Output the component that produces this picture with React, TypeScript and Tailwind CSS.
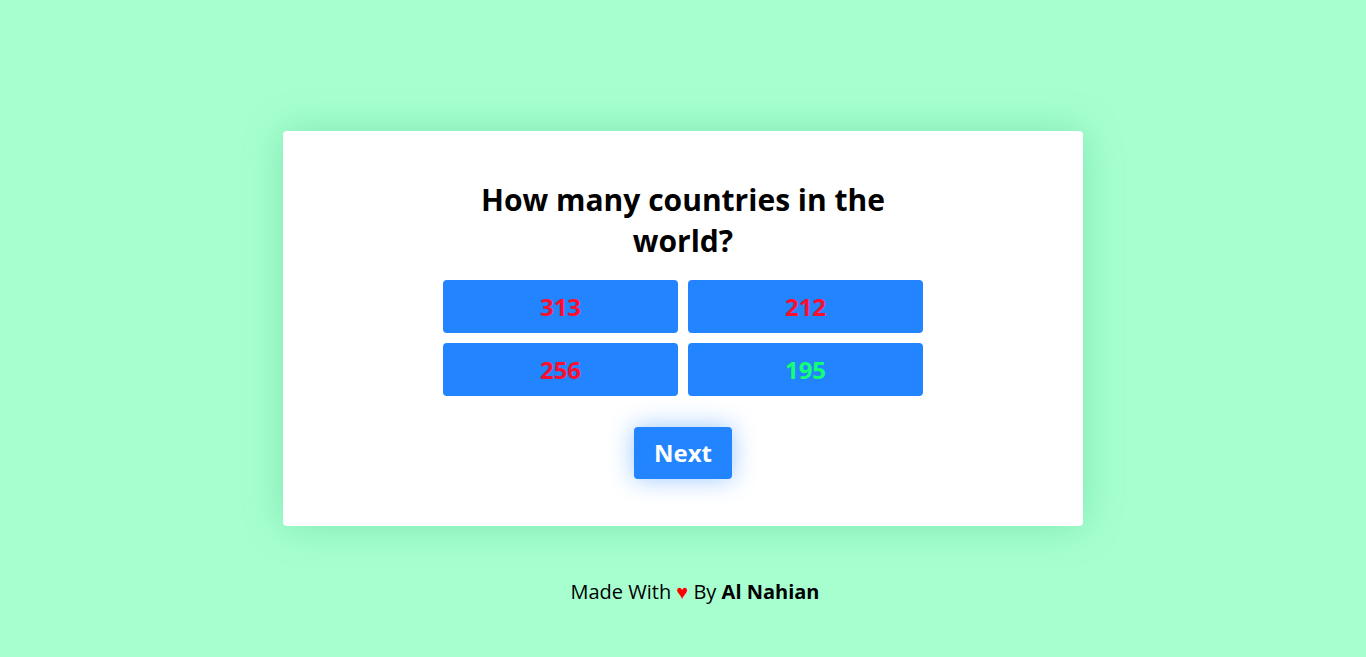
import React from "react";

export default function App() {
  const answers = [
    { t: "313", c: "text-[#ff0d2d]" },
    { t: "212", c: "text-[#ff0d2d]" },
    { t: "256", c: "text-[#ff0d2d]" },
    { t: "195", c: "text-[#13ff74]" },
  ];
  return (
    <div
      className="min-h-[657px] w-full bg-[#a7ffd0] flex flex-col items-center"
      style={{ fontFamily: '"Open Sans", sans-serif' }}
    >
      <div className="mt-[131px] w-[800px] h-[395px] bg-white rounded-[4px] shadow-[0_0_40px_rgba(0,160,80,0.25)] flex flex-col items-center pt-[48px]">
        <div className="w-[480px] flex flex-col items-center">
          <h1 className="text-[30px] leading-[41px] font-bold text-black text-center w-[440px]">
            How many countries in the world?
          </h1>
          <div className="mt-[19px] grid grid-cols-2 gap-[10px] w-[480px]">
            {answers.map((a) => (
              <button
                key={a.t}
                className={`h-[53px] rounded-[4px] bg-[#2284ff] text-[24px] font-bold ${a.c}`}
              >
                {a.t}
              </button>
            ))}
          </div>
          <button className="mt-[31px] w-[98px] h-[52px] rounded-[4px] bg-[#2284ff] text-white text-[24px] font-bold shadow-[0_0_25px_rgba(34,132,255,0.45)]">
            Next
          </button>
        </div>
      </div>
      <p className="mt-[51px] pl-[24px] text-[20px] text-black">
        Made With <span className="text-[#ff0000]">♥</span> By <b>Al Nahian</b>
      </p>
    </div>
  );
}
